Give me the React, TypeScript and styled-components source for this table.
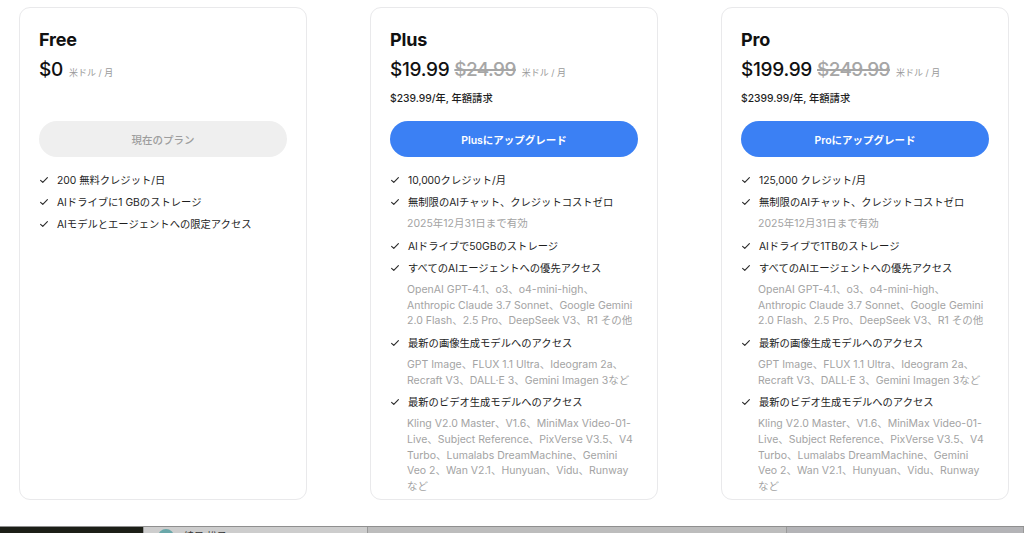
import React from "react";
import styled, { createGlobalStyle } from "styled-components";

const Global = createGlobalStyle`
  html, body { margin: 0; padding: 0; background: #ffffff; }
  body {
    font-family: Inter, "Noto Sans CJK JP", sans-serif;
    color: #1a1a1a;
    -webkit-font-smoothing: antialiased;
  }
  #root { width: 1024px; height: 533px; overflow: hidden; }
`;

const Page = styled.div`
  width: 1024px;
  height: 533px;
  display: flex;
  flex-direction: column;
  overflow: hidden;
`;

const CardsRow = styled.div`
  display: flex;
  gap: 63px;
  padding: 7px 0 0 19px;
  height: 493px;
  box-sizing: content-box;
`;

const Card = styled.div`
  width: 288px;
  height: 493px;
  box-sizing: border-box;
  border: 1px solid #e9e9eb;
  border-radius: 11px;
  background: #fff;
  padding: 20px 19px 0 19px;
  display: flex;
  flex-direction: column;
  overflow: hidden;
`;

const Title = styled.div`
  font-size: 18px;
  line-height: 24px;
  font-weight: 700;
  color: #111;
  letter-spacing: -0.2px;
`;

const PriceRow = styled.div`
  display: flex;
  align-items: baseline;
  gap: 5px;
  margin-top: 4px;
  height: 28px;
`;

const Price = styled.span`
  font-size: 19px;
  line-height: 28px;
  font-weight: 500;
  color: #111;
  letter-spacing: -0.3px;
`;

const OldPrice = styled.span`
  font-size: 19px;
  line-height: 28px;
  font-weight: 500;
  color: #a6a6a6;
  text-decoration: line-through;
  text-decoration-thickness: 1.5px;
  letter-spacing: -0.6px;
`;

const Unit = styled.span`
  font-size: 9px;
  color: #9a9a9a;
  margin-left: 1px;
`;

const Annual = styled.div`
  margin-top: 6px;
  height: 16px;
  font-size: 10.3px;
  line-height: 16px;
  font-weight: 500;
  color: #1e1e1e;
`;

const PlanButton = styled.button<{ $current?: boolean }>`
  margin-top: 15px;
  width: 100%;
  height: 36px;
  border: none;
  border-radius: 18px;
  background: ${(p) => (p.$current ? "#efefef" : "#3b80f4")};
  color: ${(p) => (p.$current ? "#9d9d9d" : "#ffffff")};
  font-family: inherit;
  font-size: 10.5px;
  font-weight: ${(p) => (p.$current ? 500 : 600)};
  cursor: pointer;
`;

const Features = styled.ul`
  list-style: none;
  margin: 15px 0 0 0;
  padding: 0;
  display: flex;
  flex-direction: column;
  gap: 6.1px;
`;

const Feature = styled.li`
  display: flex;
  align-items: center;
  gap: 9px;
  font-size: 10.3px;
  line-height: 16px;
  color: #1e1e1e;
  white-space: nowrap;
`;

const Sub = styled.li`
  padding-left: 17px;
  font-size: 10.5px;
  line-height: 15.6px;
  color: #a3a3a3;
  white-space: nowrap;
`;

const SubLine = styled.span`
  display: block;
`;

const CheckIcon = styled.svg`
  flex: none;
  width: 8px;
  height: 8px;
  margin-left: 1px;
`;

const Check = () => (
  <CheckIcon viewBox="0 0 8 8">
    <polyline points="0.6,4.3 2.8,6.4 7.4,1.6" fill="none" stroke="#2a2a2a" strokeWidth="1.1" strokeLinecap="round" strokeLinejoin="round" />
  </CheckIcon>
);

const Spacer = styled.div`
  height: 26px;
`;

const Taskbar = styled.div`
  height: 7px;
  display: flex;
  overflow: hidden;
  border-top: 1px solid #8f8f8f;
  box-sizing: border-box;
`;

const TaskSeg = styled.div<{ $w: number; $bg: string }>`
  width: ${(p) => p.$w}px;
  flex: none;
  background: ${(p) => p.$bg};
  border-right: 1px solid #9a9a9a;
  box-sizing: border-box;
  display: flex;
  align-items: flex-start;
  gap: 10px;
  padding-left: 14px;
`;

const Avatar = styled.div`
  width: 16px;
  height: 16px;
  border-radius: 50%;
  background: #6aa7a9;
  margin-top: 2px;
  flex: none;
`;

const TaskText = styled.span`
  font-size: 10px;
  line-height: 12px;
  margin-top: 3px;
  color: #333;
`;

type Item = { kind: "f"; text: string } | { kind: "s"; lines: string[] };

type Plan = {
  name: string;
  price: string;
  old?: string;
  annual?: string;
  button: string;
  current?: boolean;
  items: Item[];
};

const agentsSub: Item = {
  kind: "s",
  lines: [
    "OpenAI GPT-4.1、o3、o4-mini-high、",
    "Anthropic Claude 3.7 Sonnet、Google Gemini",
    "2.0 Flash、2.5 Pro、DeepSeek V3、R1 その他",
  ],
};
const imageSub: Item = {
  kind: "s",
  lines: ["GPT Image、FLUX 1.1 Ultra、Ideogram 2a、", "Recraft V3、DALL·E 3、Gemini Imagen 3など"],
};
const videoSub: Item = {
  kind: "s",
  lines: [
    "Kling V2.0 Master、V1.6、MiniMax Video-01-",
    "Live、Subject Reference、PixVerse V3.5、V4",
    "Turbo、Lumalabs DreamMachine、Gemini",
    "Veo 2、Wan V2.1、Hunyuan、Vidu、Runway",
    "など",
  ],
};

const plans: Plan[] = [
  {
    name: "Free",
    price: "$0",
    button: "現在のプラン",
    current: true,
    items: [
      { kind: "f", text: "200 無料クレジット/日" },
      { kind: "f", text: "AIドライブに1 GBのストレージ" },
      { kind: "f", text: "AIモデルとエージェントへの限定アクセス" },
    ],
  },
  {
    name: "Plus",
    price: "$19.99",
    old: "$24.99",
    annual: "$239.99/年, 年額請求",
    button: "Plusにアップグレード",
    items: [
      { kind: "f", text: "10,000クレジット/月" },
      { kind: "f", text: "無制限のAIチャット、クレジットコストゼロ" },
      { kind: "s", lines: ["2025年12月31日まで有効"] },
      { kind: "f", text: "AIドライブで50GBのストレージ" },
      { kind: "f", text: "すべてのAIエージェントへの優先アクセス" },
      agentsSub,
      { kind: "f", text: "最新の画像生成モデルへのアクセス" },
      imageSub,
      { kind: "f", text: "最新のビデオ生成モデルへのアクセス" },
      videoSub,
    ],
  },
  {
    name: "Pro",
    price: "$199.99",
    old: "$249.99",
    annual: "$2399.99/年, 年額請求",
    button: "Proにアップグレード",
    items: [
      { kind: "f", text: "125,000 クレジット/月" },
      { kind: "f", text: "無制限のAIチャット、クレジットコストゼロ" },
      { kind: "s", lines: ["2025年12月31日まで有効"] },
      { kind: "f", text: "AIドライブで1TBのストレージ" },
      { kind: "f", text: "すべてのAIエージェントへの優先アクセス" },
      agentsSub,
      { kind: "f", text: "最新の画像生成モデルへのアクセス" },
      imageSub,
      { kind: "f", text: "最新のビデオ生成モデルへのアクセス" },
      videoSub,
    ],
  },
];

export default function App() {
  return (
    <>
      <Global />
      <Page>
        <CardsRow>
          {plans.map((p) => (
            <Card key={p.name}>
              <Title>{p.name}</Title>
              <PriceRow>
                <Price>{p.price}</Price>
                {p.old && <OldPrice>{p.old}</OldPrice>}
                <Unit>米ドル / 月</Unit>
              </PriceRow>
              <Annual>{p.annual ?? ""}</Annual>
              <PlanButton $current={p.current}>{p.button}</PlanButton>
              <Features>
                {p.items.map((it, i) =>
                  it.kind === "f" ? (
                    <Feature key={i}>
                      <Check />
                      {it.text}
                    </Feature>
                  ) : (
                    <Sub key={i}>
                      {it.lines.map((l, j) => (
                        <SubLine key={j}>{l}</SubLine>
                      ))}
                    </Sub>
                  )
                )}
              </Features>
            </Card>
          ))}
        </CardsRow>
        <Spacer />
        <Taskbar>
          <TaskSeg $w={144} $bg="#1c1f17" />
          <TaskSeg $w={224} $bg="#cdcdcd">
            <Avatar />
            <TaskText>綾目 松子</TaskText>
          </TaskSeg>
          <TaskSeg $w={419} $bg="#bdbdbd" />
          <TaskSeg $w={237} $bg="#b4b4b7" />
        </Taskbar>
      </Page>
    </>
  );
}
